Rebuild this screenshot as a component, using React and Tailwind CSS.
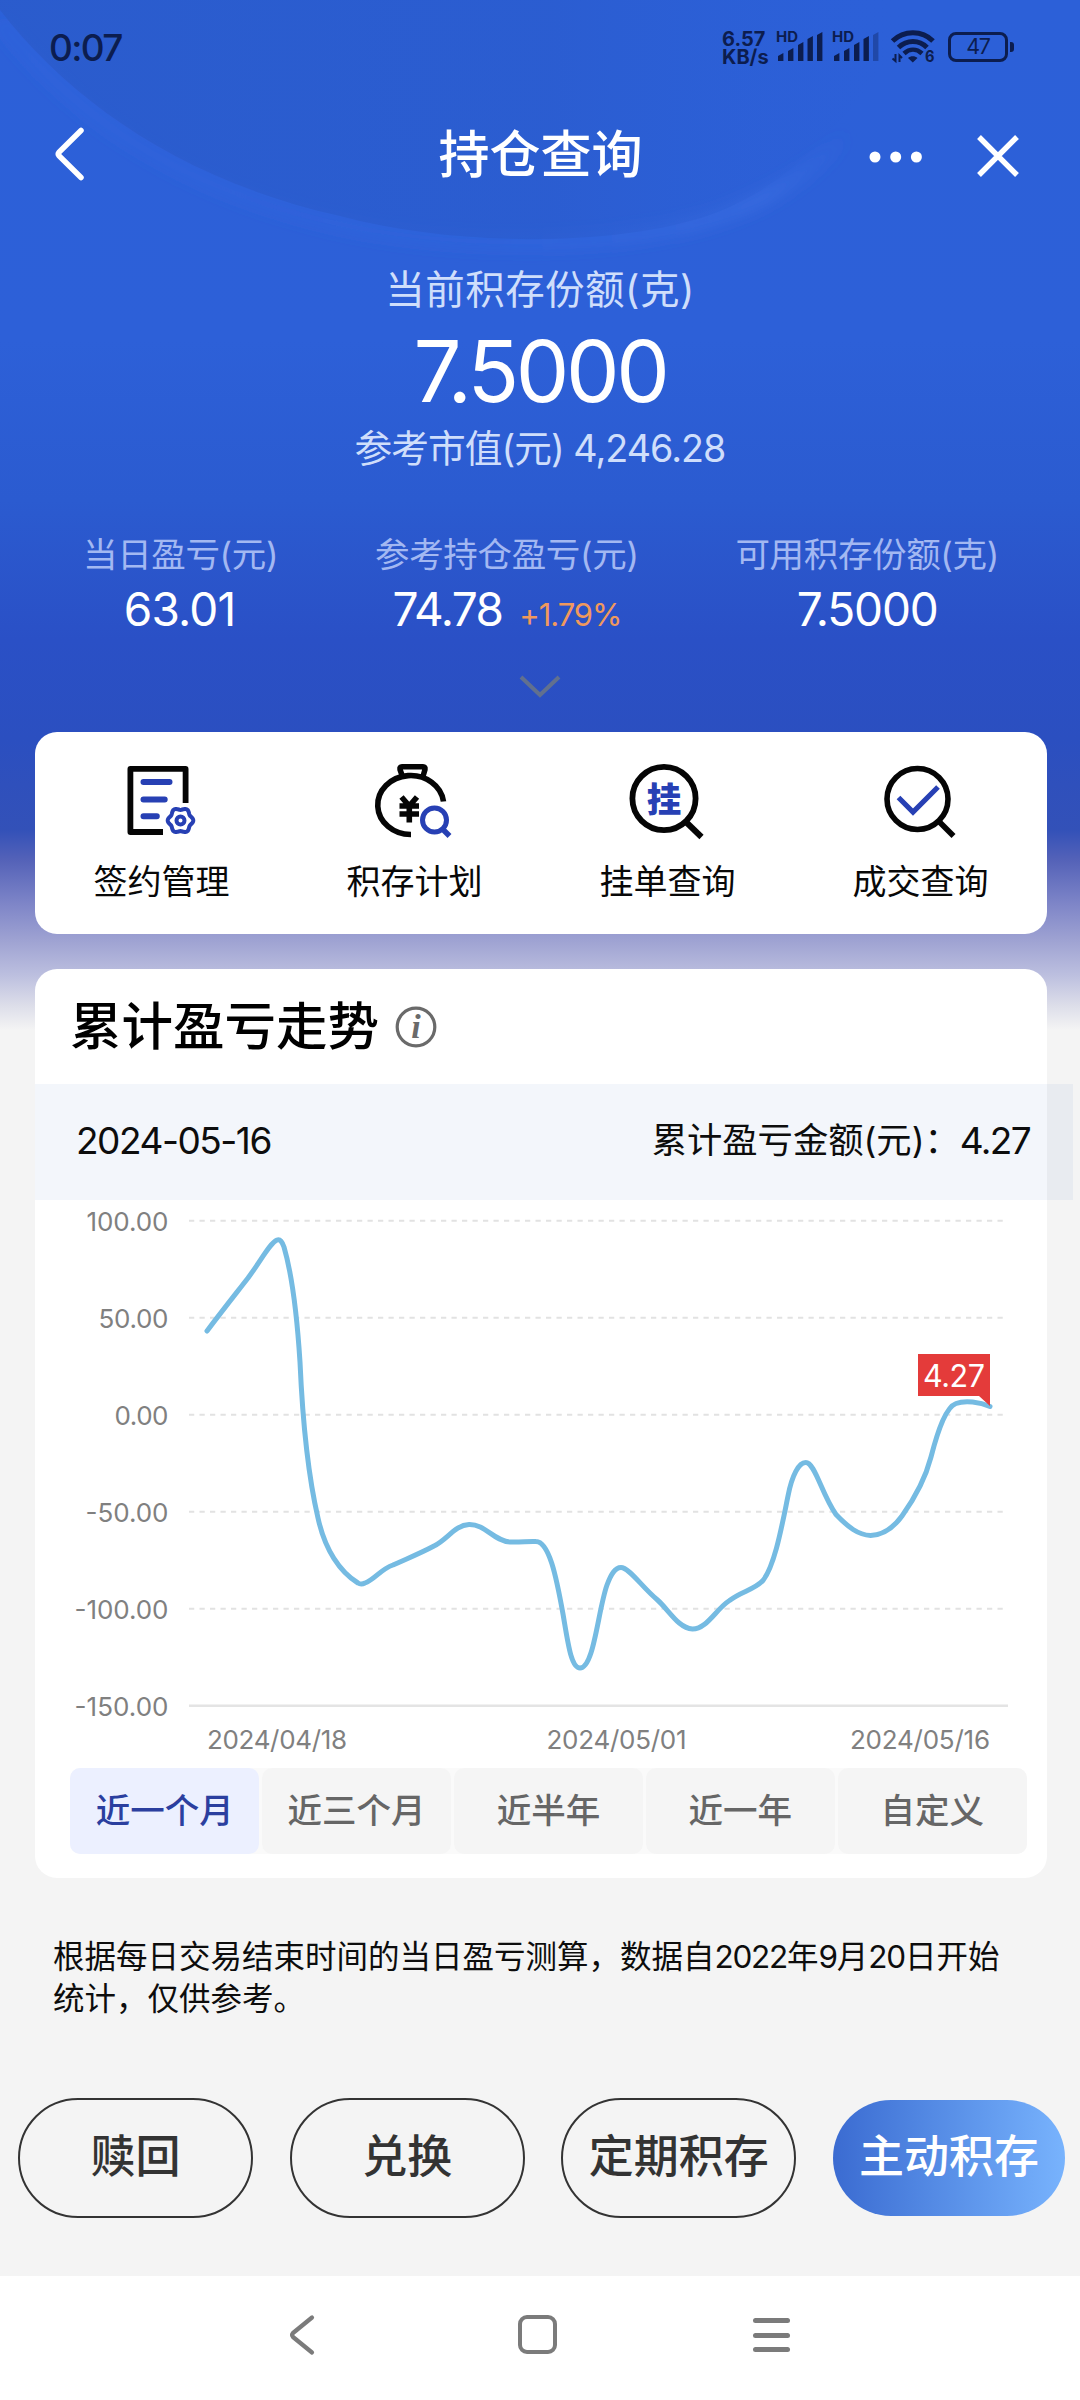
const FONT = "font-[Inter,'Noto_Sans_CJK_SC',sans-serif]";

const INK = '#0c1d4f';

function SignalBars({ faded }) {
  const bars = [
    [2, 22],
    [12, 17],
    [22, 11],
    [31.5, 5],
    [41, 1],
  ];
  return (
    <svg className="block h-[42px] w-[48px] overflow-visible" viewBox="0 -5 48 42">
      <text x="0" y="11" fontSize="14" fontWeight="700" fontFamily="Inter" fill={INK} textLength="22" lengthAdjust="spacingAndGlyphs">HD</text>
      {bars.map(([x, y], i) => (
        <path
          key={x}
          d={`M${x} 30V${y + 3}L${x + 5.4} ${y}V30Z`}
          fill={INK}
          opacity={faded && i === 4 ? 0.35 : 1}
        />
      ))}
    </svg>
  );
}

function WifiIcon() {
  return (
    <svg className="block h-[42px] w-[44px] overflow-visible" viewBox="0 -4 44 42" fill="none" stroke={INK}>
      <path d="M1.5 11C13 0 31 0 42 11" strokeWidth="5" />
      <path d="M7.5 17.500C16 9.500 28 9.500 36 17.500" strokeWidth="5" />
      <path d="M13 23.5C18.500 18.500 25.500 18.500 31 23.5" strokeWidth="4.600" />
      <path d="M17 28C19.500 25.500 24 25.500 26.500 28L21.800 32.500Z" fill={INK} stroke="none" />
      <path d="M4.500 24V31L1.500 28.500M8.500 32V25.500L11 28" strokeWidth="2" />
      <text x="34" y="32" fontSize="16" fontWeight="700" fontFamily="Inter" fill={INK} stroke="none" textLength="9.500" lengthAdjust="spacingAndGlyphs">6</text>
    </svg>
  );
}

function StatusBar() {
  return (
    <div className="flex h-[94px] items-center justify-between pl-[49px] pr-[66px]">
      <div className="text-[37px] font-medium leading-none tracking-[-0.045em] text-[#0c1d4f]">0:07</div>
      <div className="flex items-center">
        <div className="w-[54px] pt-[2px] text-[20px] font-bold leading-[18px] text-[#0c1d4f]">
          <div>6.57</div>
          <div>KB/s</div>
        </div>
        <SignalBars />
        <div className="w-2" />
        <SignalBars faded />
        <div className="w-[11px]" />
        <WifiIcon />
        <div className="flex items-center pl-[13px]">
          <div className="flex h-[30px] w-[60px] items-center justify-center rounded-[8px] border-[3px] border-[#0c1d4f] text-[21.500px] leading-none tracking-[-0.06em] text-[#0c1d4f]">47</div>
          <div className="ml-[2px] h-[10px] w-[4px] rounded-r-[3px] bg-[#0c1d4f]" />
        </div>
      </div>
    </div>
  );
}

function TitleBar() {
  return (
    <div className="grid h-[120px] grid-cols-[1fr_auto_1fr] items-center pl-[61px] pr-[60px] text-white">
      <svg className="-ml-[9px] block h-[60px] w-[36px]" viewBox="0 0 36 60" fill="none" stroke="currentColor" strokeWidth="5.500" strokeLinecap="round" strokeLinejoin="round">
        <path d="M29 6.500L7 28.200Q5.500 30 7 31.800L29 53.500" />
      </svg>
      <h1 className="text-[51px] font-medium leading-none">持仓查询</h1>
      <div className="flex items-center justify-end">
        <svg className="mt-[6px] block h-[12px] w-[54px]" viewBox="0 0 54 12" fill="currentColor">
          <circle cx="6" cy="6" r="5.500" />
          <circle cx="26.700" cy="6" r="5.500" />
          <circle cx="47.400" cy="6" r="5.500" />
        </svg>
        <svg className="ml-[53px] mt-[4px] block h-[44px] w-[44px]" viewBox="0 0 44 44" fill="none" stroke="currentColor" strokeWidth="5.400">
          <path d="M3 3L41 41M41 3L3 41" />
        </svg>
      </div>
    </div>
  );
}

function Stat({ label, children }) {
  return (
    <div className="flex flex-col items-center">
      <div className="text-[34.500px] leading-[50px] tracking-[-0.01em] text-[#a3b8f2]">{label}</div>
      <div className="flex items-baseline text-[46px] leading-[58px] text-white">{children}</div>
    </div>
  );
}

function Summary() {
  return (
    <section className="flex flex-col items-center pt-[46px]">
      <div className="text-[39.500px] leading-[60px] tracking-[0.012em] text-[#cfdefb]">当前积存份额(克)</div>
      <div className="mt-[4px] text-[85px] leading-[96px] tracking-[-0.04em] text-white">7.5000</div>
      <div className="text-[37.700px] leading-[56px] tracking-[-0.026em] text-[#cfdefb]">参考市值(元) 4,246.28</div>
      <div className="mt-[54px] flex w-full justify-between pl-[83px] pr-[81px]">
        <Stat label="当日盈亏(元)"><span className="-ml-[2px] tracking-[-0.018em]">63.01</span></Stat>
        <Stat label="参考持仓盈亏(元)">
          <span className="tracking-[-0.035em]">74.78</span>
          <span className="ml-[17px] text-[31px] tracking-[-0.035em] text-[#f0995c]">+1.79%</span>
        </Stat>
        <Stat label="可用积存份额(克)"><span className="tracking-[-0.025em]">7.5000</span></Stat>
      </div>
      <svg className="mt-[31px] block h-[24px] w-[42px]" viewBox="0 0 42 24" fill="none" stroke="#61708f" strokeWidth="4">
        <path d="M2 2L21 20L40 2" />
      </svg>
    </section>
  );
}

const gearPoints = Array.from({ length: 72 }, (_, i) => {
  const a = (i * Math.PI) / 36;
  const r = 11.7 + 1.1 * Math.cos(6 * a);
  return `${(63.5 + r * Math.cos(a)).toFixed(2)},${(60.5 + r * Math.sin(a)).toFixed(2)}`;
}).join(' ');

function ContractIcon() {
  return (
    <svg className="block h-[80px] w-[90px]" viewBox="0 0 90 80" fill="none">
      <path d="M68.600 43V8.900H13.400V72H46" stroke="#050505" strokeWidth="5.800" strokeLinejoin="round" />
      <path d="M26.500 22H52.500M26.500 39.500H47.700M26.500 56.300H39.800" stroke="#2740b4" strokeWidth="6" strokeLinecap="round" />
      <polygon points={gearPoints} stroke="#2740b4" strokeWidth="4" strokeLinejoin="round" />
      <circle cx="63.500" cy="60.500" r="4" stroke="#2740b4" strokeWidth="4" />
    </svg>
  );
}

function PlanIcon() {
  return (
    <svg className="block h-[80px] w-[90px]" viewBox="0 0 90 80" fill="none">
      <path d="M33 18L30 9.500Q29.500 6.800 32 6.800H53Q55.500 6.800 55 9.500L52.500 18" stroke="#050505" strokeWidth="5.500" strokeLinejoin="round" />
      <path d="M73.500 41.500A33 29.500 0 1 0 41 74.500" stroke="#050505" strokeWidth="5.600" />
      <path d="M31.500 37L39.300 46L47 37M29.500 46H49M29.500 54H49M39.300 44V62.500" stroke="#050505" strokeWidth="5.600" />
      <circle cx="64.500" cy="60" r="12" stroke="#2740b4" strokeWidth="5" />
      <path d="M72.500 69L79.500 76" stroke="#2740b4" strokeWidth="5.500" />
    </svg>
  );
}

function OrderIcon() {
  return (
    <svg className="block h-[80px] w-[90px]" viewBox="0 0 90 80" fill="none">
      <circle cx="41" cy="38.500" r="31.600" stroke="#050505" strokeWidth="5.800" />
      <path d="M63 62L78.500 77" stroke="#050505" strokeWidth="6" />
      <text x="41" y="51.500" textAnchor="middle" fontSize="34.500" fontWeight="900" fontFamily="'Noto Sans CJK SC', sans-serif" fill="#2740b4">挂</text>
    </svg>
  );
}

function DealIcon() {
  return (
    <svg className="block h-[80px] w-[90px]" viewBox="0 0 90 80" fill="none">
      <circle cx="41.500" cy="39" r="30.500" stroke="#050505" strokeWidth="5.600" />
      <path d="M62.500 61L77.500 76" stroke="#050505" strokeWidth="5.600" />
      <path d="M22.500 37.500L37 52L62 27" stroke="#2740b4" strokeWidth="5.200" />
    </svg>
  );
}

const actions = [
  { label: '签约管理', Icon: ContractIcon },
  { label: '积存计划', Icon: PlanIcon },
  { label: '挂单查询', Icon: OrderIcon },
  { label: '成交查询', Icon: DealIcon },
];

function ActionCard() {
  return (
    <section className="mx-[35px] grid h-[202px] w-[1012px] grid-cols-4 rounded-[22px] bg-white pt-[28px]">
      {actions.map(({ label, Icon }) => (
        <button key={label} className="flex flex-col items-center">
          <Icon />
          <span className="mt-[17px] text-[34px] leading-[50px] text-[#080808]">{label}</span>
        </button>
      ))}
    </section>
  );
}

const yTicks = ['100.00', '50.00', '0.00', '-50.00', '-100.00', '-150.00'];
const yTickWidths = [82, 70, 54, 83, 94, 94];
const xTicks = [
  ['2024/04/18', 172],
  ['2024/05/01', 511.5],
  ['2024/05/16', 815],
];

const TREND =
  'M207 1331C222 1311 234 1296 248 1278C262 1259 270 1243 277 1240C280 1239 282 1241 284 1247C293 1278 297 1315 300 1362C303 1430 308 1475 318 1518C325 1550 340 1572 358 1583Q361 1585 365 1583C374 1580 381 1569 393 1565C406 1559 419 1554 434 1546C447 1540 455 1525 469 1524.500C485 1524 494 1541 510 1542C520 1542.500 529 1541 536 1541.500C549 1542 556 1575 563 1614C568 1643 571 1668 580 1668C594 1668 598 1610 607 1585C611 1574 615 1567.500 621 1567.500C629 1567.500 642 1587 657 1599.500C669 1610 678 1628 692.500 1629C707 1629 716 1609 729.500 1600.500C742 1591 754 1590 763 1580.500C775 1565 782 1525 788 1496C792 1475 799 1462.500 805.500 1462.500C815 1462 821 1493 836 1514.500C848 1527 858 1535 870.600 1535.500C883 1535 894 1527 902 1516C912 1502 925 1480 931 1457C938 1430 946 1407 956 1403.500C965 1400 980 1402 990 1406.500';

function TrendChart() {
  return (
    <svg className="block h-[568px] w-[1012px]" viewBox="0 0 1012 568" fontFamily="Inter, sans-serif">
      {yTicks.map((tick, i) => {
        const y = 20.7 + i * 97;
        const last = i === yTicks.length - 1;
        return (
          <g key={tick}>
            <path
              d={`M154 ${y}H973`}
              stroke={last ? '#e4e4e4' : '#e2e2e2'}
              strokeWidth={last ? 2.5 : 2}
              strokeDasharray={last ? undefined : '5.25 5.25'}
            />
            <text x={133.5 - yTickWidths[i]} y={y + 10} fontSize="26" fill="#808080" textLength={yTickWidths[i]}>
              {tick}
            </text>
          </g>
        );
      })}
      {xTicks.map(([label, x]) => (
        <text key={label} x={x} y="549" fontSize="26" fill="#808080" textLength="140">
          {label}
        </text>
      ))}
      <g transform="translate(-35 -1200)">
        <path d={TREND} fill="none" stroke="#75bbe2" strokeWidth="5" strokeLinecap="round" strokeLinejoin="round" />
        <path d="M918 1354H990V1406L979 1396H918Z" fill="#e43b3a" />
        <text x="923" y="1386.500" fontSize="30.500" fill="#fff" textLength="62">4.27</text>
      </g>
    </svg>
  );
}

const ranges = ['近一个月', '近三个月', '近半年', '近一年', '自定义'];

function TrendCard() {
  return (
    <section className="mx-[35px] mt-[35px] h-[909px] w-[1012px] rounded-[22px] bg-white">
      <div className="flex h-[115px] items-center pl-[35px]">
        <h2 className="text-[51.500px] font-medium leading-none text-black">累计盈亏走势</h2>
        <svg className="ml-[16px] block h-[42px] w-[42px]" viewBox="0 0 42 42" fill="none">
          <circle cx="21" cy="21" r="18.800" stroke="#6a6a6a" strokeWidth="3.200" />
          <text x="21" y="32" textAnchor="middle" fontSize="34" fontWeight="700" fontStyle="italic" fontFamily="'Liberation Serif', serif" fill="#6a6a6a">i</text>
        </svg>
      </div>
      <div className="flex h-[116px] w-[1038px] items-center justify-between bg-[rgba(15,75,175,0.05)] pb-[3px] pl-[41px] pr-[43px] text-[#0d0d0d]">
        <div className="text-[37px] leading-none tracking-[-0.04em]">2024-05-16</div>
        <div className="flex items-center text-[35.300px] leading-none">
          <span>累计盈亏金额(元)：</span>
          <span className="text-[37px] tracking-[-0.045em]">4.27</span>
        </div>
      </div>
      <TrendChart />
      <div className="ml-[35px] flex w-[957px] gap-[2.500px] rounded-[10px] bg-[#fafafa]">
        {ranges.map((r, i) => (
          <button
            key={r}
            className={
              i === 0
                ? 'h-[86px] w-[189.400px] rounded-[10px] bg-[#ecf0ff] text-[34.500px] font-medium leading-none text-[#2b3f9f]'
                : 'h-[86px] w-[189.400px] rounded-[10px] bg-[#f5f5f5] text-[34.500px] font-medium leading-none text-[#666]'
            }
          >
            {r}
          </button>
        ))}
      </div>
    </section>
  );
}

function BottomNav() {
  return (
    <nav className="flex h-[124px] items-start bg-white pl-[286px] pt-[36px]">
      <svg className="block h-[46px] w-[32px]" viewBox="0 0 32 46" fill="none" stroke="#7b7b7b" strokeWidth="4.200" strokeLinecap="round" strokeLinejoin="round">
        <path d="M26 5.500L7 21Q5.200 23 7 25L26 40.500" />
      </svg>
      <div className="ml-[200px] mt-[3px] h-[39px] w-[39px] rounded-[9px] border-[4.500px] border-[#7b7b7b]" />
      <div className="ml-[196px] mt-[6px] flex flex-col gap-[9.500px]">
        <div className="h-[5px] w-[37px] rounded-full bg-[#7b7b7b]" />
        <div className="h-[5px] w-[37px] rounded-full bg-[#7b7b7b]" />
        <div className="h-[5px] w-[37px] rounded-full bg-[#7b7b7b]" />
      </div>
    </nav>
  );
}

function HeaderBackdrop() {
  return (
    <div className="absolute inset-x-0 top-0 -z-10 h-[1040px] bg-[linear-gradient(to_bottom,#2c60d8_0px,#2d60d8_340px,#2b5bd0_500px,#2a50c6_640px,#2b4fc0_740px,#3351b8_830px,#5462b8_860px,#7f86c8_905px,#9ea2d2_940px,#bcbfdf_975px,#dcdde9_1005px,#f4f4f4_1030px)]">
      <svg className="block h-[760px] w-[1080px]" viewBox="0 0 1080 760">
        <defs>
          <linearGradient id="arcFill" x1="0" y1="0" x2="1" y2="0">
            <stop offset="0" stopColor="#2a5ac8" stopOpacity="0.7" />
            <stop offset="0.6" stopColor="#2a5bcc" stopOpacity="0.6" />
            <stop offset="1" stopColor="#2c60d8" stopOpacity="0" />
          </linearGradient>
          <linearGradient id="rim" x1="0" y1="0" x2="1" y2="0">
            <stop offset="0" stopColor="#3a70ea" stopOpacity="0.15" />
            <stop offset="0.6" stopColor="#3a70ea" stopOpacity="0.2" />
            <stop offset="0.9" stopColor="#4578e8" stopOpacity="0.4" />
            <stop offset="1" stopColor="#4578e8" stopOpacity="0" />
          </linearGradient>
          <filter id="glow" x="-10%" y="-10%" width="120%" height="130%">
            <feGaussianBlur stdDeviation="7" />
          </filter>
        </defs>
        <path d="M0 22C70 110 170 185 330 222C450 250 600 248 700 222C760 205 800 180 850 135" fill="none" stroke="url(#rim)" strokeWidth="16" filter="url(#glow)" />
        <path d="M0 10C70 100 180 180 340 216C460 248 620 246 710 215C770 192 800 165 850 110C890 60 910 30 920 0H0Z" fill="url(#arcFill)" />
      </svg>
    </div>
  );
}

export default function App() {
  return (
    <div className={`relative isolate flex h-[2400px] w-[1080px] flex-col overflow-hidden bg-[#f4f4f4] ${FONT}`}>
      <HeaderBackdrop />
      <StatusBar />
      <TitleBar />
      <Summary />
      <div className="h-[33px]" />
      <ActionCard />
      <TrendCard />
      <p className="mt-[58px] h-[84px] whitespace-nowrap pl-[53px] text-[31.500px] leading-[42px] text-[#0d0d0d]">
        根据每日交易结束时间的当日盈亏测算，数据自<span className="tracking-[-0.04em]">2022</span>年<span className="tracking-[-0.04em]">9</span>月<span className="tracking-[-0.04em]">20</span>日开始
        <br />
        统计，仅供参考。
      </p>
      <div className="mt-[78px] flex justify-between pl-[18px] pr-[15px] text-[45px] font-medium leading-none text-[#333]">
        <button className="h-[120px] w-[235px] rounded-full border-2 border-[#333] pb-[3px]">赎回</button>
        <button className="h-[120px] w-[235px] rounded-full border-2 border-[#333] pb-[3px]">兑换</button>
        <button className="h-[120px] w-[235px] rounded-full border-2 border-[#333] pb-[3px]">定期积存</button>
        <button className="mt-[2px] h-[116px] w-[232px] rounded-full bg-linear-to-r from-[#3b6bd1] to-[#78b3fd] pb-[3px] text-white">主动积存</button>
      </div>
      <div className="flex-1" />
      <BottomNav />
    </div>
  );
}
